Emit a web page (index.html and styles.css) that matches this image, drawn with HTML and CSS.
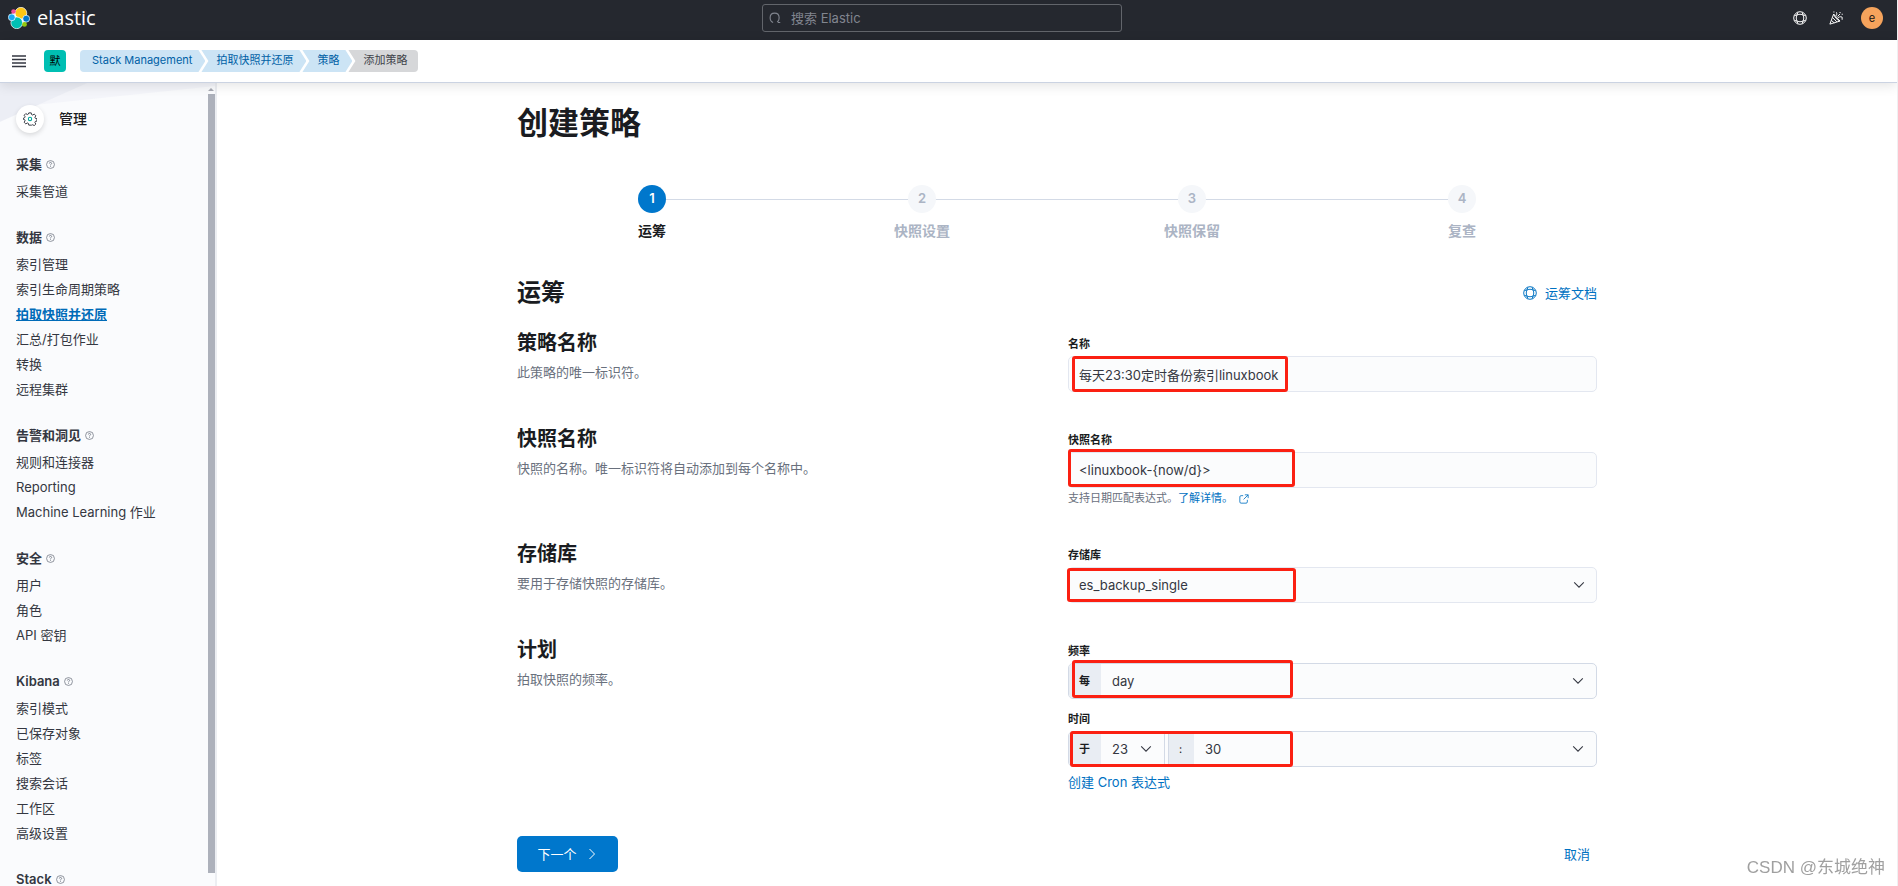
FILE: index.html
```html
<!DOCTYPE html>
<html lang="zh-CN">
<head>
<meta charset="utf-8">
<title>创建策略 - Elastic</title>
<link rel="stylesheet" href="styles.css">
</head>
<body>
<svg class="sprite" aria-hidden="true">
  <symbol id="help" viewBox="0 0 16 16"><circle cx="8" cy="8" r="7" fill="none" stroke="currentColor" stroke-width="1.300"/><path d="M6 6.200a2 2 0 1 1 2.900 1.800c-.6.3-.9.6-.9 1.400M8 10.600v1.400" fill="none" stroke="currentColor" stroke-width="1.400"/></symbol>
  <symbol id="ring" viewBox="0 0 16 16"><g fill="none" stroke="currentColor" stroke-width="1.100"><circle cx="8" cy="8" r="7.200"/><rect x="3.800" y="3.800" width="8.400" height="8.400" rx="3"/><path d="M5.600 1.400l-1 3-3.100 1M10.400 1.400l1 3 3.100 1M5.600 14.600l-1-3-3.100-1M10.400 14.600l1-3 3.100-1"/></g></symbol>
  <symbol id="down" viewBox="0 0 16 16"><path d="M2.500 5l5.500 5.500L13.500 5" fill="none" stroke="currentColor" stroke-width="1.200"/></symbol>
</svg>

<header class="topbar">
  <a class="brand" href="#" aria-label="elastic">
    <svg class="brand-mark" viewBox="0 0 32 32" aria-hidden="true">
      <circle cx="16" cy="16" r="12" fill="#fff"/>
      <circle cx="18.800" cy="9" r="8.500" fill="#fec514" stroke="#fff"/>
      <circle cx="12.700" cy="23" r="8.500" fill="#00bfb3" stroke="#fff"/>
      <circle cx="5.500" cy="15" r="5" fill="#1ba9f5" stroke="#fff"/>
      <circle cx="26.500" cy="17" r="5" fill="#0077cc" stroke="#fff"/>
      <circle cx="8" cy="6.500" r="3.300" fill="#f04e98"/>
      <circle cx="24" cy="25.300" r="3.500" fill="#93c90e"/>
    </svg>
    <span class="brand-name">elastic</span>
  </a>
  <label class="search">
    <svg class="icon-xs" viewBox="0 0 16 16" aria-hidden="true"><path d="M5.500 14C3 13.200 1.500 11 1.500 7.800c0-4 2.500-6.300 6-6.300s6 2.300 6 6.300c0 2.200-.5 3.800-1.700 5M11 12l1.500 2H15" fill="none" stroke="currentColor" stroke-width="1.500"/></svg>
    <input class="search-input" type="search" placeholder="搜索 Elastic" aria-label="搜索 Elastic">
  </label>
  <div class="top-actions">
    <button class="icon-button" type="button" aria-label="帮助"><svg class="icon" aria-hidden="true"><use href="#ring"/></svg></button>
    <button class="icon-button" type="button" aria-label="新增功能"><svg class="icon" viewBox="0 0 16 16" aria-hidden="true"><g fill="none" stroke="currentColor" stroke-width="1.100"><path d="M5.300 3.500L1 15l11.500-3.500zM4 7.500l5 5M2.800 10.800l3.200 2.800M5.300 3.500c1 3.500 3.700 6.500 7.200 8"/><path d="M8 5.500C9 4.500 9.200 3 8.500 1.500M10.300 7.800c1.200-1.300 2.700-1.600 4.700-.8V10M9.700 6.300l3-3"/></g><path d="M12 1h1.200v1.200H12zM14.500 3h1.200v1.200h-1.200zM5 .5h1.200v1.200H5z" fill="currentColor"/></svg></button>
    <button class="avatar" type="button" aria-label="用户">e</button>
  </div>
</header>

<div class="subbar">
  <button class="menu-button" type="button" aria-label="菜单"><svg class="icon" viewBox="0 0 14 14" aria-hidden="true"><path d="M0 2h14M0 5.500h14M0 9h14M0 12.500h14" stroke="#343741" stroke-width="1.400"/></svg></button>
  <button class="space" type="button">默</button>
  <nav class="crumbs" aria-label="面包屑">
    <a class="crumb" href="#">Stack Management</a>
    <a class="crumb" href="#">拍取快照并还原</a>
    <a class="crumb" href="#">策略</a>
    <span class="crumb crumb-last">添加策略</span>
  </nav>
</div>

<div class="shell">
  <aside class="sidebar">
    <nav class="side-nav" aria-label="管理">
      <div class="side-title">
        <span class="gear"><svg class="icon" viewBox="0 0 16 16" aria-hidden="true"><path d="M6.600 1h2.800l.4 1.900 1.300.6 1.700-1.100 1.900 1.900-1.100 1.700.5 1.200 1.900.5v2.600l-1.900.5-.5 1.200 1.100 1.700-1.900 1.900-1.700-1.100-1.300.6L9.400 15H6.600l-.4-1.900-1.300-.6-1.700 1.100-1.900-1.900L2.400 10l-.5-1.200L.5 8.500V7l1.400-.5.5-1.100-1.100-1.700 1.900-1.900 1.700 1.100 1.300-.6z" fill="none" stroke="#343741" stroke-width="1.100"/><circle cx="8" cy="8" r="1.900" fill="none" stroke="#00a69b" stroke-width="1.200"/></svg></span>
        <h2 class="side-heading">管理</h2>
      </div>
      <section class="group">
        <h3 class="group-title">采集<svg class="hint" aria-hidden="true"><use href="#help"/></svg></h3>
        <a class="side-link" href="#">采集管道</a>
      </section>
      <section class="group">
        <h3 class="group-title">数据<svg class="hint" aria-hidden="true"><use href="#help"/></svg></h3>
        <a class="side-link" href="#">索引管理</a>
        <a class="side-link" href="#">索引生命周期策略</a>
        <a class="side-link side-link-active" href="#">拍取快照并还原</a>
        <a class="side-link" href="#">汇总/打包作业</a>
        <a class="side-link" href="#">转换</a>
        <a class="side-link" href="#">远程集群</a>
      </section>
      <section class="group">
        <h3 class="group-title">告警和洞见<svg class="hint" aria-hidden="true"><use href="#help"/></svg></h3>
        <a class="side-link" href="#">规则和连接器</a>
        <a class="side-link" href="#">Reporting</a>
        <a class="side-link" href="#">Machine Learning 作业</a>
      </section>
      <section class="group">
        <h3 class="group-title">安全<svg class="hint" aria-hidden="true"><use href="#help"/></svg></h3>
        <a class="side-link" href="#">用户</a>
        <a class="side-link" href="#">角色</a>
        <a class="side-link" href="#">API 密钥</a>
      </section>
      <section class="group">
        <h3 class="group-title">Kibana<svg class="hint" aria-hidden="true"><use href="#help"/></svg></h3>
        <a class="side-link" href="#">索引模式</a>
        <a class="side-link" href="#">已保存对象</a>
        <a class="side-link" href="#">标签</a>
        <a class="side-link" href="#">搜索会话</a>
        <a class="side-link" href="#">工作区</a>
        <a class="side-link" href="#">高级设置</a>
      </section>
      <section class="group">
        <h3 class="group-title">Stack<svg class="hint" aria-hidden="true"><use href="#help"/></svg></h3>
      </section>
    </nav>
    <div class="scrollbar" aria-hidden="true"><span class="scroll-arrow"></span><span class="scroll-thumb"></span></div>
  </aside>

  <main class="main">
    <form class="content">
      <h1 class="page-title">创建策略</h1>
      <ol class="steps">
        <li class="step step-current"><span class="step-number">1</span><span class="step-label">运筹</span></li>
        <li class="step"><span class="step-number">2</span><span class="step-label">快照设置</span></li>
        <li class="step"><span class="step-number">3</span><span class="step-label">快照保留</span></li>
        <li class="step"><span class="step-number">4</span><span class="step-label">复查</span></li>
      </ol>
      <div class="section-head">
        <h2 class="section-title">运筹</h2>
        <a class="doc-link" href="#"><svg class="icon" aria-hidden="true"><use href="#ring"/></svg>运筹文档</a>
      </div>

      <div class="rows">
        <section class="row">
          <div class="about"><h3 class="about-title">策略名称</h3><p class="about-text">此策略的唯一标识符。</p></div>
          <div class="field">
            <label class="label" for="name">名称</label>
            <div class="control"><input class="input" id="name" type="text" value="每天23:30定时备份索引linuxbook"><span class="mark mark-name"></span></div>
          </div>
        </section>
        <section class="row">
          <div class="about"><h3 class="about-title">快照名称</h3><p class="about-text">快照的名称。唯一标识符将自动添加到每个名称中。</p></div>
          <div class="field">
            <label class="label" for="snapshot">快照名称</label>
            <div class="control"><input class="input" id="snapshot" type="text" value="&lt;linuxbook-{now/d}&gt;"><span class="mark mark-snapshot"></span></div>
            <p class="help">支持日期匹配表达式。<a class="help-link" href="#">了解详情。<svg class="external" viewBox="0 0 12 12" aria-hidden="true"><path d="M5 2H2.500A1.500 1.500 0 0 0 1 3.500v6A1.500 1.500 0 0 0 2.500 11h6A1.500 1.500 0 0 0 10 9.500V7M7 1h4v4M11 1L5.500 6.500" fill="none" stroke="currentColor"/></svg></a></p>
          </div>
        </section>
        <section class="row">
          <div class="about"><h3 class="about-title">存储库</h3><p class="about-text">要用于存储快照的存储库。</p></div>
          <div class="field">
            <label class="label" for="repo">存储库</label>
            <div class="control"><select class="input" id="repo"><option>es_backup_single</option></select><svg class="arrow" aria-hidden="true"><use href="#down"/></svg><span class="mark mark-repo"></span></div>
          </div>
        </section>
        <section class="row">
          <div class="about"><h3 class="about-title">计划</h3><p class="about-text">拍取快照的频率。</p></div>
          <div class="field">
            <label class="label" for="frequency">频率</label>
            <div class="control joined">
              <label class="prefix" for="frequency">每</label>
              <div class="pick pick-wide"><select class="select" id="frequency"><option>day</option></select><svg class="arrow" aria-hidden="true"><use href="#down"/></svg></div>
              <span class="mark mark-frequency"></span>
            </div>
            <label class="label label-next" for="hour">时间</label>
            <div class="control joined">
              <label class="prefix" for="hour">于</label>
              <div class="pick pick-hour"><select class="select" id="hour"><option>23</option></select><svg class="arrow" aria-hidden="true"><use href="#down"/></svg></div>
              <label class="prefix prefix-colon" for="minute">:</label>
              <div class="pick pick-wide"><select class="select" id="minute" aria-label="分钟"><option>30</option></select><svg class="arrow" aria-hidden="true"><use href="#down"/></svg></div>
              <span class="mark mark-time"></span>
            </div>
            <a class="cron" href="#">创建 Cron 表达式</a>
          </div>
        </section>
      </div>

      <div class="footer">
        <button class="next" type="button">下一个<svg class="next-icon" viewBox="0 0 12 12" aria-hidden="true"><path d="M3.500 1l5 5-5 5" fill="none" stroke="currentColor"/></svg></button>
        <button class="cancel" type="button">取消</button>
      </div>
    </form>
  </main>
</div>
<div class="watermark">CSDN @东城绝神</div>
</body>
</html>
```
FILE: styles.css
```css
* { box-sizing: border-box; }

body {
  margin: 0;
  height: 100vh;
  display: flex;
  flex-direction: column;
  overflow: hidden;
  border-right: 1px solid #f0f0f2;
  background: #fff;
  color: #343741;
  font: 13px/20px Inter, "Noto Sans CJK SC", sans-serif;
}

h1, h2, h3, p, ol { margin: 0; padding: 0; }
a { color: #0071c2; text-decoration: none; }
button, input, select { font: inherit; color: inherit; }
button { border: 0; padding: 0; background: none; cursor: pointer; }

.sprite { position: absolute; width: 0; height: 0; }
.icon { display: block; width: 14px; height: 14px; }
.icon-xs { display: block; width: 12px; height: 12px; }

/* Top bar */
.topbar {
  flex: none;
  display: grid;
  grid-template-columns: 1fr 360px 1fr;
  align-items: center;
  height: 40px;
  padding: 0 21px 4px 8px;
  background: #25282f;
  color: #fff;
}
.brand { display: flex; align-items: center; gap: 7px; color: #fff; }
.brand-mark { width: 22px; height: 22px; }
.brand-name { font: 20px/24px "Open Sans", "Noto Sans", sans-serif; }
.search {
  display: flex;
  align-items: center;
  gap: 10px;
  height: 28px;
  padding: 0 6px;
  border: 1px solid #62656b;
  border-radius: 3px;
  color: #81858f;
}
.search-input { flex: 1; min-width: 0; padding: 0; border: 0; outline: 0; background: none; }
.search-input::placeholder { color: #81858f; opacity: 1; }
.top-actions { display: flex; align-items: center; justify-content: flex-end; gap: 22px; margin-right: -7px; }
.icon-button { color: #fff; }
.avatar {
  width: 22px;
  height: 22px;
  border-radius: 50%;
  background: #f5a35c;
  color: #111;
  font-size: 11px;
  line-height: 22px;
}
.top-actions .avatar { margin-left: -4px; }

/* Breadcrumb bar */
.subbar {
  flex: none;
  display: flex;
  align-items: center;
  height: 43px;
  padding-left: 12px;
  border-bottom: 1px solid #cbd3e2;
  background: #fff;
  box-shadow: 0 2px 12px rgba(0, 0, 0, .12);
  position: relative;
  z-index: 2;
}
.menu-button { margin-right: 18px; }
.space {
  width: 22px;
  height: 22px;
  margin-right: 14px;
  border-radius: 4px;
  background: #00bfb3;
  color: #000;
  font-size: 11px;
  line-height: 20px;
}
.crumbs { display: flex; font-size: 11px; line-height: 20px; }
.crumb {
  height: 22px;
  margin-right: -4px;
  padding: 0 13px 0 15px;
  background: #cce4f5;
  color: #0061a6;
  clip-path: polygon(0 0, calc(100% - 7px) 0, 100% 50%, calc(100% - 7px) 100%, 0 100%, 7px 50%);
}
.crumb:first-child {
  padding-left: 12px;
  border-radius: 4px 0 0 4px;
  clip-path: polygon(0 0, calc(100% - 7px) 0, 100% 50%, calc(100% - 7px) 100%, 0 100%);
}
.crumb-last {
  padding-right: 11px;
  border-radius: 0 4px 4px 0;
  background: #d6d7d9;
  color: #404349;
  clip-path: polygon(0 0, 100% 0, 100% 100%, 0 100%, 7px 50%);
}

/* Layout */
.shell { flex: 1; min-height: 0; display: flex; }

/* Sidebar */
.sidebar {
  flex: none;
  display: flex;
  width: 217px;
  overflow: hidden;
  border-right: 2px solid #eceef2;
  background:
    linear-gradient(156deg, #eceef5 0 35px, transparent 36px),
    linear-gradient(174deg, #f4f5fa 0 25px, transparent 26px),
    #fafbfd;
}
.side-nav { flex: 1; min-width: 0; padding: 22px 0 0 16px; }
.side-title { display: flex; align-items: center; gap: 15px; height: 28px; margin-bottom: 21px; }
.gear {
  display: grid;
  place-items: center;
  width: 28px;
  height: 28px;
  border-radius: 50%;
  background: #fff;
  box-shadow: 0 2px 5px rgba(0, 0, 0, .14);
}
.side-heading { color: #1a1c21; font-size: 14px; font-weight: 500; line-height: 24px; }
.group { display: flex; flex-direction: column; align-items: flex-start; margin-bottom: 21px; }
.group-title {
  display: flex;
  align-items: center;
  gap: 4px;
  height: 20px;
  margin-bottom: 7px;
  font-size: 13px;
  font-weight: 600;
  line-height: 20px;
}
.hint { width: 9px; height: 9px; color: #69707d; }
.side-link { height: 25px; color: #343741; }
.side-link-active { color: #006bb8; font-weight: 700; text-decoration: underline; }
.scrollbar { flex: none; display: flex; flex-direction: column; align-items: center; width: 8px; padding: 5px 0 13px; }
.scroll-arrow { border: 3px solid transparent; border-top-width: 0; border-bottom-color: #a8abb4; margin-bottom: 3px; }
.scroll-thumb { flex: 1; width: 7px; background: #adb1bb; }

/* Page */
.main { flex: 1; min-width: 0; overflow: hidden; padding: 0 20px; }
.content { max-width: 1080px; margin: 0 auto; padding-top: 20px; }
.page-title { color: #1a1c21; font-size: 31px; font-weight: 700; line-height: 40px; }

.steps { display: grid; grid-template-columns: repeat(4, 1fr); padding-top: 42px; list-style: none; }
.step {
  position: relative;
  display: flex;
  flex-direction: column;
  align-items: center;
  gap: 8px;
  color: #abb4c4;
  font-size: 14px;
  font-weight: 600;
}
.step + .step::before {
  content: "";
  position: absolute;
  top: 14px;
  right: 50%;
  width: 100%;
  height: 1px;
  background: #d3dae6;
}
.step-number {
  position: relative;
  z-index: 1;
  width: 28px;
  height: 28px;
  border-radius: 50%;
  background: #f5f7fa;
  font-size: 13px;
  line-height: 27px;
  text-align: center;
}
.step-current { z-index: 1; color: #1a1c21; }
.step-current .step-number { background: #07c; color: #fff; }

.section-head { display: flex; align-items: center; justify-content: space-between; padding: 38px 0 29px; }
.section-title { color: #1a1c21; font-size: 24px; font-weight: 700; line-height: 28px; }
.doc-link { display: flex; align-items: center; gap: 8px; }

.rows { display: flex; flex-direction: column; gap: 40px; }
.row { display: grid; grid-template-columns: 1fr 1fr; column-gap: 22px; }
.about { height: 56px; }
.about-title { height: 24px; margin-top: -5px; color: #1a1c21; font-size: 20px; font-weight: 700; line-height: 24px; }
.about-text { margin-top: 7px; color: #69707d; }
.field { display: flex; flex-direction: column; }
.label { height: 16px; margin-bottom: 4px; color: #1a1c21; font-size: 11px; font-weight: 600; line-height: 16px; }
.label-next { margin-top: 12px; }
.control { position: relative; height: 36px; }
.input {
  width: 100%;
  height: 36px;
  padding: 0 10px;
  border: 1px solid #e3e7f0;
  border-radius: 5px;
  outline: 0;
  background: #fbfcfd;
  appearance: none;
}
.arrow { position: absolute; right: 11px; top: 50%; width: 14px; height: 14px; margin-top: -7px; pointer-events: none; }
.joined { display: flex; border: 1px solid #d3dae6; border-radius: 5px; background: #fbfcfd; }
.prefix {
  flex: none;
  width: 32px;
  padding-left: 10px;
  border-radius: 4px 0 0 4px;
  background: #e9edf3;
  color: #1a1c21;
  font-size: 11px;
  font-weight: 600;
  line-height: 34px;
}
.prefix-colon { width: 26px; border-left: 1px solid #d3dae6; border-radius: 0; font-weight: 400; }
.pick { position: relative; }
.pick-wide { flex: 1; }
.pick-hour { width: 64px; margin-right: 3px; border-right: 1px solid #d3dae6; }
.select { width: 100%; height: 34px; padding: 0 11px; border: 0; outline: 0; background: none; appearance: none; }

.help { height: 19px; padding-top: 2px; color: #69707d; font-size: 11px; line-height: 17px; }
.external { width: 10px; height: 10px; margin-left: 6px; vertical-align: -2px; }
.cron { align-self: flex-start; height: 20px; margin-top: 5px; }

/* Highlight frames lying over the fields */
.mark { position: absolute; border: 3px solid #fb2012; border-radius: 3px; pointer-events: none; }
.mark-name { left: 4px; top: 0; width: 216px; height: 36px; }
.mark-snapshot { left: 0; top: -3px; width: 227px; height: 38px; }
.mark-repo { left: -1px; top: 1px; width: 229px; height: 34px; }
.mark-frequency { left: 3px; top: -4px; width: 221px; height: 38px; }
.mark-time { left: 1px; top: -1px; width: 223px; height: 36px; }

.footer { display: flex; align-items: center; justify-content: space-between; padding: 44px 7px 0 0; }
.next {
  display: flex;
  align-items: center;
  justify-content: center;
  gap: 9px;
  width: 101px;
  height: 36px;
  border-radius: 5px;
  background: #07c;
  color: #fff;
}
.next-icon { width: 12px; height: 12px; }
.cancel { color: #0071c2; }

.watermark {
  position: fixed;
  right: 13px;
  bottom: 6px;
  color: #a0a0a0;
  font: 17px/24px "Liberation Sans", "Noto Sans CJK SC", sans-serif;
}
```
